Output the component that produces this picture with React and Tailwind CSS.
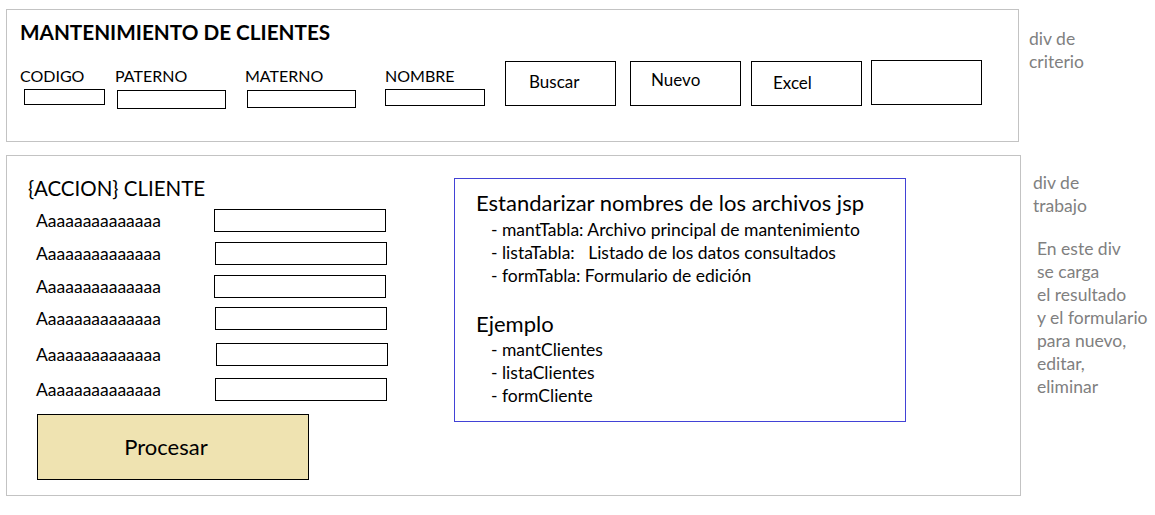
const filters = [
  { label: 'CODIGO', block: 'w-[95px]', input: 'ml-[4px] mt-[4px] w-[81px] h-[16px]' },
  { label: 'PATERNO', block: 'w-[130px]', input: 'ml-[2px] mt-[5px] w-[109px] h-[19px]' },
  { label: 'MATERNO', block: 'w-[140px]', input: 'ml-[2px] mt-[5px] w-[109px] h-[18px]' },
  { label: 'NOMBRE', block: 'w-[120px]', input: 'ml-0 mt-[4px] w-[100px] h-[17px]' },
]

const buttons = [
  { text: 'Buscar', cls: 'ml-0 pt-[10px] pl-[23px]' },
  { text: 'Nuevo', cls: 'ml-[14px] pt-[8px] pl-[20px]' },
  { text: 'Excel', cls: 'ml-[10px] pt-[11px] pl-[21px]' },
  { text: '', cls: 'ml-[9px] -mt-px' },
]

// margin above each form row, taken from the drawing
const rows = [
  { mt: 'mt-0', ml: 'ml-0' },
  { mt: 'mt-[10px]', ml: 'ml-px' },
  { mt: 'mt-[10px]', ml: 'ml-0' },
  { mt: 'mt-[9px]', ml: 'ml-px' },
  { mt: 'mt-[13px]', ml: 'ml-[2px]' },
  { mt: 'mt-[12px]', ml: 'ml-px' },
]

const jspItems = [
  '- mantTabla: Archivo principal de mantenimiento',
  '- listaTabla:   Listado de los datos consultados',
  '- formTabla: Formulario de edición',
]

const ejemploItems = ['- mantClientes', '- listaClientes', '- formCliente']

const App = () => {
  return (
    <div className="h-[515px] w-[1155px] overflow-hidden bg-white pl-[6px] pt-[9px] font-['Lato',sans-serif] text-black">
      {/* criterio */}
      <div className="flex">
        <div className="h-[133px] w-[1013px] border border-[#c3c3c3] pl-[13px] pt-[10px]">
          <h1 className="whitespace-nowrap text-[20.7px] font-bold leading-[1.2]">MANTENIMIENTO DE CLIENTES</h1>
          <div className="mt-[16px] flex items-start">
            {filters.map((f) => (
              <div key={f.label} className={`${f.block} pt-[5px]`}>
                <div className="whitespace-nowrap text-[16px] leading-[1.2]">{f.label}</div>
                <div className={`${f.input} border border-black`} />
              </div>
            ))}
            {buttons.map((b, i) => (
              <div
                key={i}
                className={`${b.cls} h-[45px] w-[111px] border border-black text-[17px] leading-[1.2]`}
              >
                {b.text}
              </div>
            ))}
          </div>
        </div>
        <div className="ml-[10px] pt-[18px] text-[17.5px] leading-[23px] text-[#808080]">
          <div>div de</div>
          <div>criterio</div>
        </div>
      </div>

      {/* trabajo */}
      <div className="mt-[13px] flex">
        <div className="flex h-[341px] w-[1015px] items-start border border-[#c3c3c3]">
          <div className="w-[447px] pl-[21px] pt-[20px]">
            <h2 className="whitespace-nowrap text-[20.5px] leading-[1.2]">{'{ACCION} CLIENTE'}</h2>
            <div className="mt-[8px] pl-[8px]">
              {rows.map((r, i) => (
                <div key={i} className={`${r.mt} flex items-center`}>
                  <div className="w-[178px] whitespace-nowrap text-[17.5px] leading-[1.2]">Aaaaaaaaaaaaaa</div>
                  <div className={`${r.ml} h-[23px] w-[172px] border border-black`} />
                </div>
              ))}
            </div>
            <div className="mt-[13px] ml-[9px] flex h-[66px] w-[272px] items-center justify-center border border-black bg-[#efe3b1] pr-[14px] text-[22px]">
              Procesar
            </div>
          </div>
          <div className="mt-[22px] h-[244px] w-[452px] border border-[#4242d6] pl-[21px] pt-[11px]">
            <div className="whitespace-nowrap text-[22px] leading-[1.2]">Estandarizar nombres de los archivos jsp</div>
            <div className="mt-[2px] pl-[15px] text-[17.5px] leading-[23px]">
              {jspItems.map((t) => (
                <div key={t} className="whitespace-pre">{t}</div>
              ))}
            </div>
            <div className="mt-[24px] text-[22px] leading-[1.2]">Ejemplo</div>
            <div className="mt-0 pl-[15px] text-[17.5px] leading-[23px]">
              {ejemploItems.map((t) => (
                <div key={t}>{t}</div>
              ))}
            </div>
          </div>
        </div>
        <div className="ml-[12px] pt-[16px] text-[17.5px] leading-[23px] text-[#808080]">
          <div>div de</div>
          <div>trabajo</div>
          <div className="mt-[20px] pl-[4px]">
            <div>En este div</div>
            <div>se carga</div>
            <div>el resultado</div>
            <div className="whitespace-nowrap">y el formulario</div>
            <div>para nuevo,</div>
            <div>editar,</div>
            <div>eliminar</div>
          </div>
        </div>
      </div>
    </div>
  )
}

export default App
